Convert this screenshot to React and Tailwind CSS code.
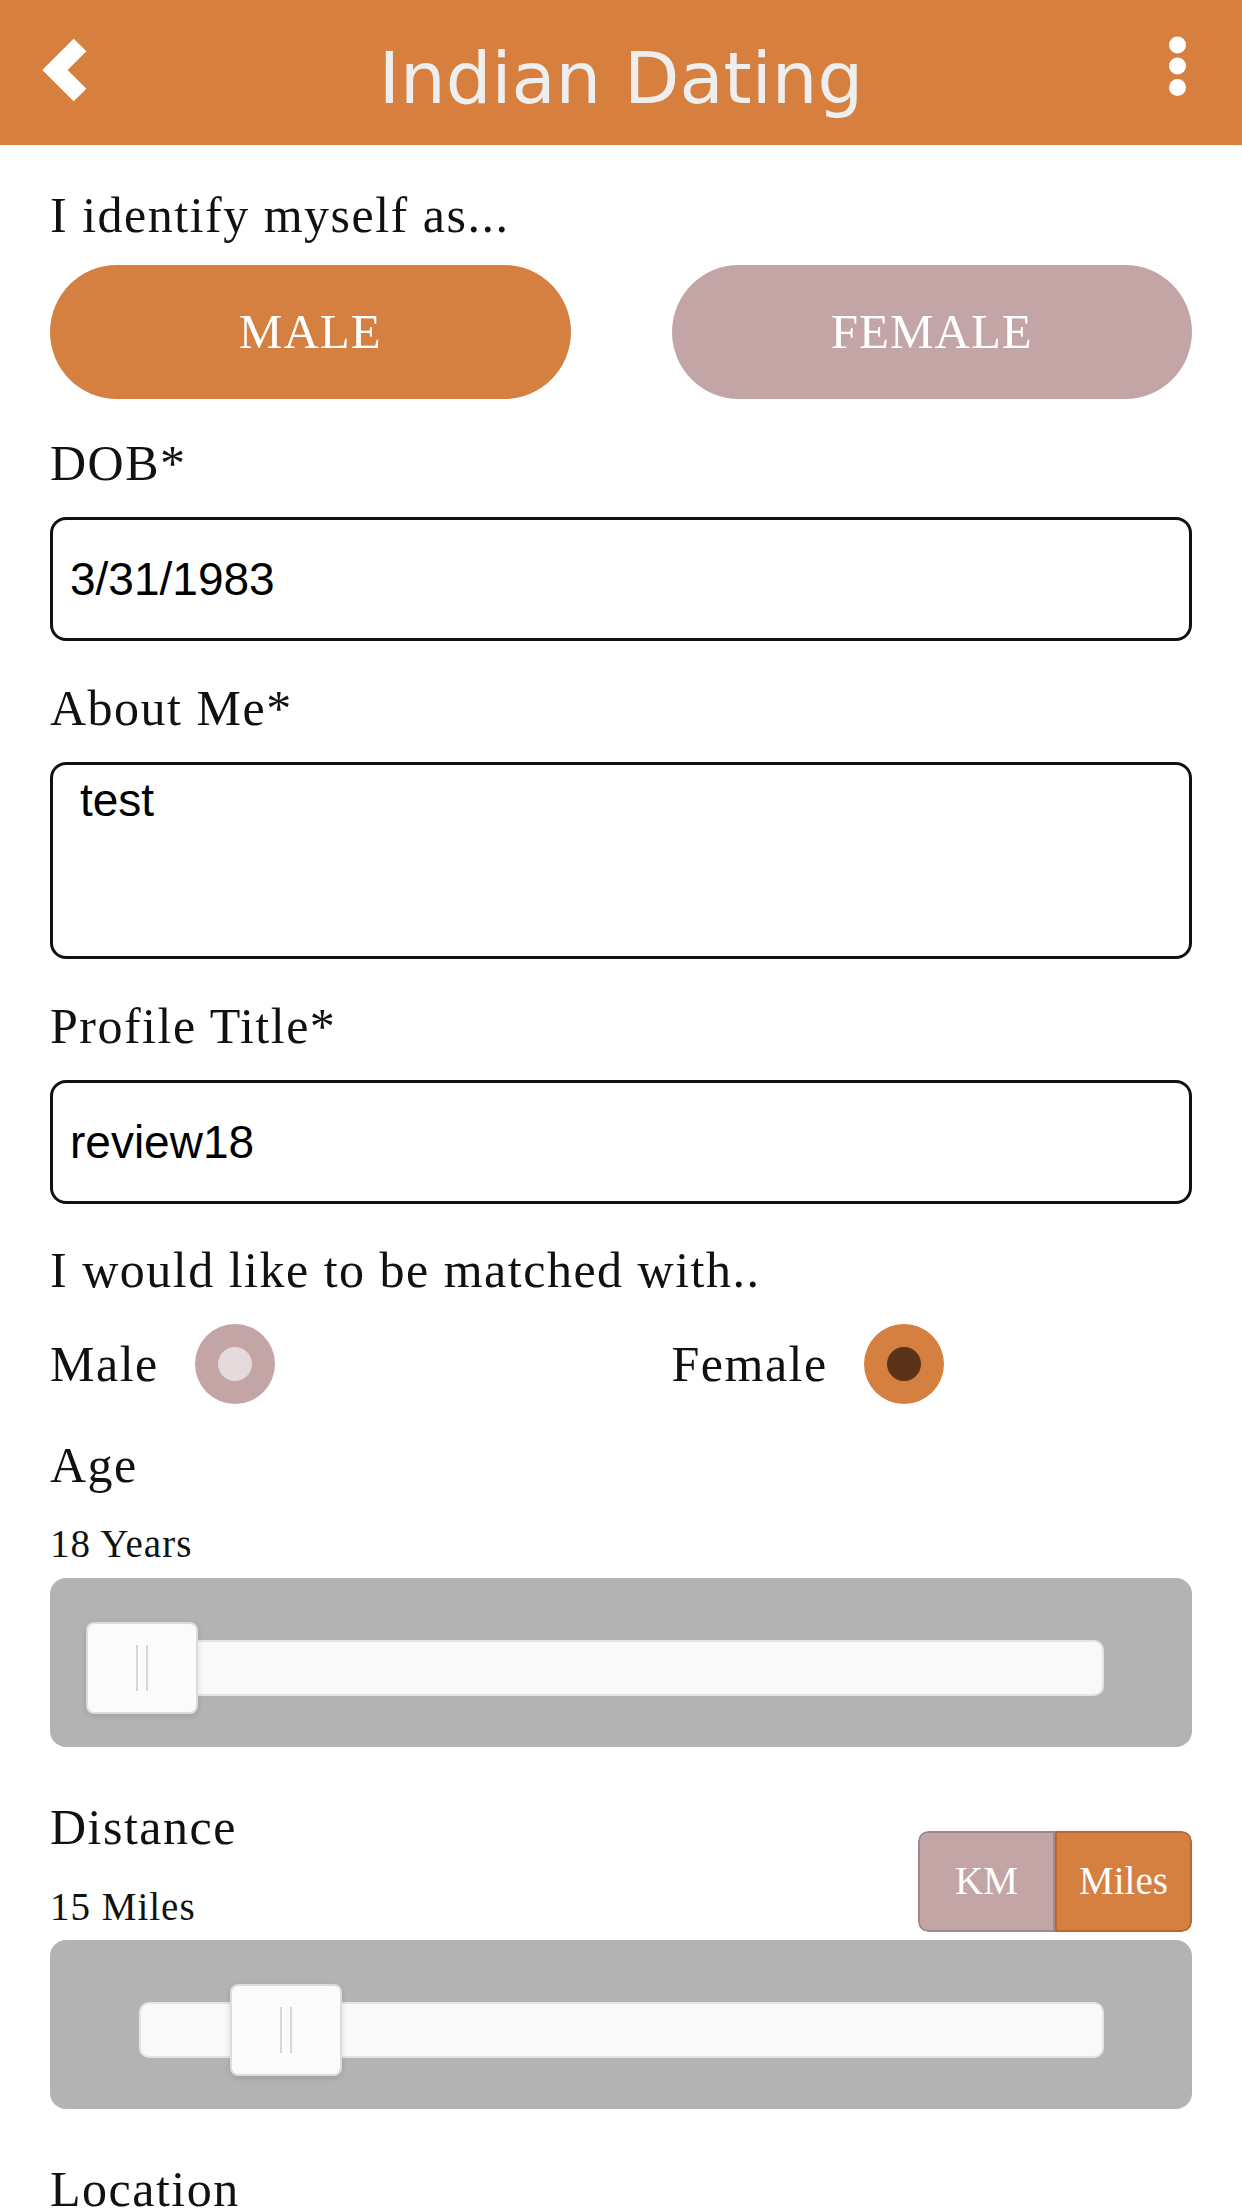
import { useState } from 'react';

function Label({ children, className = '' }) {
  return <div className={`text-[50px] leading-[50px] tracking-[1.5px] text-[#111] ${className}`}>{children}</div>;
}

function TextBox({ value, className = '' }) {
  return (
    <input
      readOnly
      value={value}
      className={`block w-full h-[124px] px-[17px] border-[3px] border-[#111] rounded-[16px] bg-white text-[46px] text-black font-['Liberation_Sans',sans-serif] outline-none ${className}`}
    />
  );
}

function Radio({ checked }) {
  return (
    <span
      className={`flex items-center justify-center w-[80px] h-[80px] rounded-full ${
        checked ? 'bg-[#D57F40]' : 'bg-[#C4A5A5]'
      }`}
    >
      <span className={`w-[34px] h-[34px] rounded-full ${checked ? 'bg-[#5A3218]' : 'bg-[#E5DADB]'}`} />
    </span>
  );
}

function Slider({ trackLeft, thumbLeft }) {
  return (
    <div className="flex items-center h-[169px] pt-[11px] bg-[#B3B3B3] rounded-[16px]">
      <div
        className="relative flex-1 h-[56px] mr-[88px] bg-[#F9F9F9] border-2 border-[#E4E4E4] rounded-[10px]"
        style={{ marginLeft: trackLeft }}
      >
        <div
          className="absolute top-1/2 -translate-y-1/2 flex items-center justify-center gap-[8px] w-[112px] h-[92px] bg-[#FBFBFB] border-2 border-[#DCDCDC] rounded-[8px] shadow-[0_2px_6px_rgba(0,0,0,0.12)]"
          style={{ left: thumbLeft }}
        >
          <span className="w-[2px] h-[46px] bg-[#D6D6D6]" />
          <span className="w-[2px] h-[46px] bg-[#D6D6D6]" />
        </div>
      </div>
    </div>
  );
}

export default function App() {
  const [gender, setGender] = useState('male');
  const [match, setMatch] = useState('female');
  const [unit, setUnit] = useState('miles');

  return (
    <div className="w-[1242px] min-h-[2208px] bg-white font-['Liberation_Serif',serif] text-[#111]">
      {/* Header */}
      <header className="grid grid-cols-[200px_1fr_200px] h-[145px] bg-[#D77F3E]">
        <svg width="100" height="145" viewBox="0 0 100 145">
          <polyline points="80,45 55,70 80,95" fill="none" stroke="#fff" strokeWidth="18" strokeLinejoin="miter" />
        </svg>
        <h1 className="mt-[42px] text-center text-[72px] leading-[72px] text-[#EEEEEE] font-['DejaVu_Sans',sans-serif] font-normal whitespace-nowrap">
          Indian Dating
        </h1>
        <div className="flex justify-end">
          <svg width="142" height="145" viewBox="0 0 142 145">
            <circle cx="77.5" cy="45" r="8.5" fill="#fff" />
            <circle cx="77.5" cy="66" r="8.5" fill="#fff" />
            <circle cx="77.5" cy="87.5" r="8.5" fill="#fff" />
          </svg>
        </div>
      </header>

      <main className="px-[50px] pb-[60px]">
        <Label className="mt-[45px]">I identify myself as...</Label>
        <div className="grid grid-cols-2 gap-x-[101px] mt-[25px]">
          <button
            onClick={() => setGender('male')}
            className={`h-[134px] rounded-full text-white text-[49px] tracking-[1px] ${gender === 'male' ? 'bg-[#D57F40]' : 'bg-[#C4A5A5]'}`}
          >
            MALE
          </button>
          <button
            onClick={() => setGender('female')}
            className={`h-[134px] rounded-full text-white text-[49px] tracking-[1px] ${gender === 'female' ? 'bg-[#D57F40]' : 'bg-[#C4A5A5]'}`}
          >
            FEMALE
          </button>
        </div>

        <Label className="mt-[39px]">DOB*</Label>
        <TextBox value="3/31/1983" className="mt-[29px]" />

        <Label className="mt-[42px]">About Me*</Label>
        <textarea
          readOnly
          value="test"
          className="block w-full h-[197px] mt-[29px] pt-[9px] pl-[27px] border-[3px] border-[#111] rounded-[16px] bg-white text-[46px] leading-[53px] text-black font-['Liberation_Sans',sans-serif] outline-none resize-none"
        />

        <Label className="mt-[42px]">Profile Title*</Label>
        <TextBox value="review18" className="mt-[29px]" />

        <Label className="mt-[41px]">I would like to be matched with..</Label>
        <div className="grid grid-cols-2 gap-x-[101px] mt-[29px] h-[80px]">
          <label className="flex items-center gap-[36px] cursor-pointer" onClick={() => setMatch('male')}>
            <span className="text-[50px] leading-[50px] tracking-[1.5px]">Male</span>
            <Radio checked={match === 'male'} />
          </label>
          <label className="flex items-center gap-[36px] cursor-pointer" onClick={() => setMatch('female')}>
            <span className="text-[50px] leading-[50px] tracking-[1.5px]">Female</span>
            <Radio checked={match === 'female'} />
          </label>
        </div>

        <Label className="mt-[36px]">Age</Label>
        <div className="mt-[34px] text-[39px] leading-[39px] tracking-[1px]">18 Years</div>
        <div className="mt-[15px]">
          <Slider trackLeft={36} thumbLeft={-2} />
        </div>

        <div className="flex items-start justify-between mt-[55px]">
          <div>
            <Label>Distance</Label>
            <div className="mt-[35px] text-[39px] leading-[39px] tracking-[1px]">15 Miles</div>
          </div>
          <div className="flex mt-[29px] w-[274px] h-[101px] rounded-[10px] overflow-hidden text-white text-[39px]">
            <button
              onClick={() => setUnit('km')}
              className={`flex-1 border-2 rounded-l-[10px] ${
                unit === 'km' ? 'bg-[#D57F40] border-[#B8692F]' : 'bg-[#C4A5A5] border-[#A08888]'
              }`}
            >
              KM
            </button>
            <button
              onClick={() => setUnit('miles')}
              className={`flex-1 border-2 rounded-r-[10px] ${
                unit === 'miles' ? 'bg-[#D57F40] border-[#B8692F]' : 'bg-[#C4A5A5] border-[#A08888]'
              }`}
            >
              Miles
            </button>
          </div>
        </div>
        <div className="mt-[8px]">
          <Slider trackLeft={89} thumbLeft={89} />
        </div>

        <Label className="mt-[55px]">Location</Label>
      </main>
    </div>
  );
}
